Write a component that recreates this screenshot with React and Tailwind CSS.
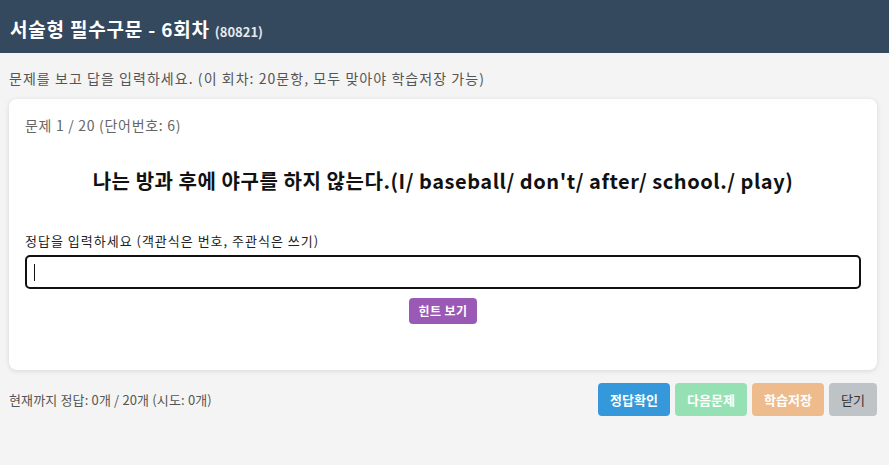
export default function App() {
  const font = { fontFamily: '"Noto Sans CJK KR", "Noto Sans", sans-serif' };
  return (
    <div className="min-h-[465px] bg-[#f4f4f4]" style={font}>
      <div className="flex h-[53px] items-center bg-[#34495e] px-[10px] pt-[3px]">
        <h1 className="text-[19px] font-bold text-white leading-none tracking-[0.8px]">
          서술형 필수구문 - 6회차 <span className="text-[13px] tracking-[0px] text-[#e6e9ec]">(80821)</span>
        </h1>
      </div>
      <div className="ml-[9px] mr-[12px]">
        <p className="mt-[15px] text-[14px] leading-[20px] text-[#555] tracking-[1.05px]">
          문제를 보고 답을 입력하세요. (이 회차: 20문항, 모두 맞아야 학습저장 가능)
        </p>
        <div className="mt-[11px] rounded-[8px] bg-white px-[16px] pt-[16px] pb-[46px] shadow-[0_1px_5px_rgba(0,0,0,0.12)]">
          <div className="text-[14px] leading-[20px] text-[#666] tracking-[0.7px]">문제 1 / 20 (단어번호: 6)</div>
          <div className="mt-[32px] text-center text-[20px] font-bold leading-[28px] text-[#111] tracking-[0.55px]">
            나는 방과 후에 야구를 하지 않는다.(I/ baseball/ don't/ after/ school./ play)
          </div>
          <label className="mt-[36px] block text-[13px] leading-[20px] text-[#222] tracking-[1px]">
            정답을 입력하세요 (객관식은 번호, 주관식은 쓰기)
          </label>
          <div className="relative mt-[4px]">
            <input
              type="text"
              className="block h-[34px] w-full rounded-[5px] border-2 border-[#111] bg-white px-[8px] text-[14px] outline-none"
            />
            <span className="absolute left-[9px] top-[9px] h-[17px] w-px bg-[#111]" />
          </div>
          <div className="mt-[9px] flex justify-center">
            <button className="h-[26px] rounded-[4px] bg-[#9b59b6] px-[10px] text-[12px] font-bold text-white tracking-[0.4px]">
              힌트 보기
            </button>
          </div>
        </div>
        <div className="mt-[13px] flex items-center justify-between">
          <span className="text-[13px] text-[#555] tracking-[0.15px]">현재까지 정답: 0개 / 20개 (시도: 0개)</span>
          <div className="flex gap-[5px]">
            <button className="h-[33px] w-[72px] rounded-[4px] bg-[#3498db] text-[13px] font-bold text-white">정답확인</button>
            <button className="h-[33px] w-[72px] rounded-[4px] bg-[#95e1b3] text-[13px] font-bold text-white">다음문제</button>
            <button className="h-[33px] w-[72px] rounded-[4px] bg-[#eebb8c] text-[13px] font-bold text-white">학습저장</button>
            <button className="h-[33px] w-[48px] rounded-[4px] bg-[#bdc3c7] text-[13px] text-[#333]">닫기</button>
          </div>
        </div>
      </div>
    </div>
  );
}
